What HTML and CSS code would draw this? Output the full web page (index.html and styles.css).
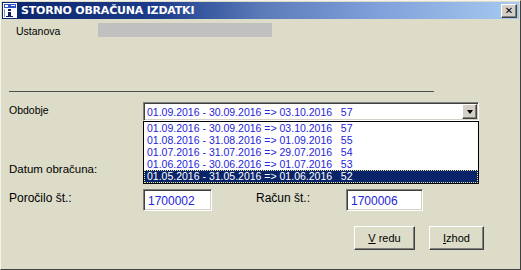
FILE: index.html
```html
<!DOCTYPE html>
<html lang="sl">
<head>
    <meta charset="UTF-8">
    <title>Storno obračuna izdatki</title>
    <link rel="stylesheet" href="styles.css">
</head>
<body>
    <div class="window">
        <div class="titlebar">
            <svg class="app-icon" width="14" height="15" viewBox="0 0 14 15">
                <rect x="0" y="0" width="14" height="15" fill="#ffffff"/>
                <rect x="1" y="1" width="12" height="4" fill="#3050c8"/>
                <rect x="2" y="2" width="3" height="2" fill="#ffffff"/>
                <rect x="8" y="2" width="4" height="1" fill="#ffffff"/>
                <rect x="5" y="6" width="3" height="2" fill="#102060"/>
                <rect x="5" y="9" width="3" height="5" fill="#102060"/>
                <rect x="3" y="13" width="7" height="1" fill="#102060"/>
                <rect x="1" y="6" width="1" height="8" fill="#8090c0"/>
            </svg>
            <span class="title">STORNO OBRAČUNA IZDATKI</span>
            <button class="close-btn">&#x2715;</button>
        </div>

        <div class="content">
            <div class="row row-ustanova">
                <span class="label small">Ustanova</span>
                <div class="grey-field"></div>
            </div>

            <div class="rule"></div>

            <div class="row row-obdobje">
                <span class="label small">Obdobje</span>
                <div class="combo">
                    <span class="combo-value">01.09.2016 - 30.09.2016 =&gt; 03.10.2016   57</span>
                    <span class="combo-btn"><span class="arrow"></span></span>
                    <ul class="combo-list">
                        <li>01.09.2016 - 30.09.2016 =&gt; 03.10.2016   57</li>
                        <li>01.08.2016 - 31.08.2016 =&gt; 01.09.2016   55</li>
                        <li>01.07.2016 - 31.07.2016 =&gt; 29.07.2016   54</li>
                        <li>01.06.2016 - 30.06.2016 =&gt; 01.07.2016   53</li>
                        <li class="selected">01.05.2016 - 31.05.2016 =&gt; 01.06.2016   52</li>
                    </ul>
                </div>
            </div>

            <div class="row row-datum">
                <span class="label">Datum obračuna:</span>
            </div>

            <div class="row row-stevilke">
                <span class="label">Poročilo št.:</span>
                <div class="input input-porocilo">1700002</div>
                <span class="label label-racun">Račun št.:</span>
                <div class="input input-racun">1700006</div>
            </div>

            <div class="row row-buttons">
                <button class="btn btn-ok"><u>V</u> redu</button>
                <button class="btn btn-exit"><u>I</u>zhod</button>
            </div>
        </div>
    </div>
</body>
</html>
```

FILE: styles.css
```css
body {
    margin: 0;
    font-family: "Liberation Sans", Arial, sans-serif;
    color: #000000;
    background: #dcdcc8;
}

.window {
    width: 521px;
    height: 270px;
    box-sizing: border-box;
    background: #dcdcc8;
    border: 1px solid;
    border-color: #f4f4ec #404040 #404040 #f4f4ec;
    padding: 1px;
    overflow: hidden;
}

.titlebar {
    height: 17px;
    display: flex;
    align-items: center;
    padding-left: 1px;
    background: linear-gradient(to right, #0a246a 0%, #1c3c8c 30%, #5a7ab8 50%, #7c9cd8 70%, #a6caf0 100%);
}

.app-icon {
    flex: none;
}

.title {
    margin-left: 4px;
    color: #ffffff;
    font-family: "DejaVu Sans", sans-serif;
    font-weight: bold;
    font-size: 11px;
    letter-spacing: -0.2px;
    flex: 1;
}

.close-btn {
    width: 16px;
    height: 14px;
    margin-right: 2px;
    padding: 0;
    background: #d4d0c8;
    border: 1px solid;
    border-color: #ffffff #404040 #404040 #ffffff;
    box-shadow: inset -1px -1px 0 #808080;
    font-size: 10px;
    font-weight: bold;
    line-height: 10px;
    color: #000000;
    font-family: "DejaVu Sans", sans-serif;
}

.content {
    display: flex;
    flex-direction: column;
}

.row {
    display: flex;
}

.label {
    font-size: 12px;
}

.label.small {
    font-size: 10.5px;
}

.row-ustanova {
    margin-top: 4px;
    height: 14px;
    align-items: center;
    padding-left: 14px;
}

.row-ustanova .label {
    width: 82px;
    padding-top: 2px;
}

.grey-field {
    width: 174px;
    height: 14px;
    background: #c0c0c0;
}

.rule {
    margin: 54px 0 0 7px;
    width: 425px;
    border-top: 1px solid #505050;
}

.row-obdobje {
    margin-top: 10px;
    padding-left: 7px;
}

.row-obdobje .label {
    width: 134px;
    padding-top: 2px;
}

.combo {
    position: relative;
    width: 336px;
    height: 19px;
    box-sizing: border-box;
    background: #ffffff;
    border: 1px solid;
    border-color: #808080 #ffffff #ffffff #808080;
    box-shadow: inset 1px 1px 0 #404040, inset -1px -1px 0 #d4d0c8;
    display: flex;
    align-items: center;
}

.combo-value {
    flex: 1;
    padding-left: 3px;
    font-size: 10.5px;
    color: #2424d8;
    white-space: pre;
}

.combo-btn {
    width: 15px;
    height: 15px;
    margin-right: 1px;
    box-sizing: border-box;
    background: #d4d0c8;
    border: 1px solid;
    border-color: #ffffff #404040 #404040 #ffffff;
    box-shadow: inset -1px -1px 0 #808080;
    display: flex;
    align-items: center;
    justify-content: center;
}

.arrow {
    width: 0;
    height: 0;
    border-left: 3px solid transparent;
    border-right: 3px solid transparent;
    border-top: 4px solid #000000;
}

/* popup list of the open combo */
.combo-list {
    position: absolute;
    top: 18px;
    left: -1px;
    width: 336px;
    box-sizing: border-box;
    margin: 0;
    padding: 0;
    list-style: none;
    background: #ffffff;
    border: 1px solid #000000;
}

.combo-list li {
    height: 12px;
    line-height: 12px;
    padding-left: 3px;
    font-size: 10.5px;
    color: #2424d8;
    white-space: pre;
}

.combo-list li.selected {
    height: 13px;
    line-height: 13px;
    background: #0a246a;
    color: #ffffff;
    outline: 1px dotted #e8e8a0;
    outline-offset: -1px;
}

.row-datum {
    margin-top: 42px;
    padding-left: 7px;
}

.row-datum .label {
    font-size: 11.5px;
}

.row-stevilke {
    margin-top: 14px;
    padding-left: 7px;
    align-items: flex-start;
}

.row-stevilke .label {
    width: 134px;
    padding-top: 2px;
}

.row-stevilke .label-racun {
    width: 90px;
    margin-left: 44px;
}

.input {
    height: 22px;
    box-sizing: border-box;
    background: #ffffff;
    border: 1px solid;
    border-color: #808080 #ffffff #ffffff #808080;
    box-shadow: inset 1px 1px 0 #404040, inset -1px -1px 0 #d4d0c8;
    padding: 4px 0 0 4px;
    font-size: 12px;
    color: #2424d8;
}

.input-porocilo {
    width: 69px;
}

.input-racun {
    width: 77px;
}

.row-buttons {
    margin-top: 15px;
    padding-left: 352px;
    gap: 14px;
}

.btn {
    height: 24px;
    padding: 0;
    background: #dcdcc8;
    border: 1px solid;
    border-color: #ffffff #404040 #404040 #ffffff;
    box-shadow: inset -1px -1px 0 #808080;
    font-family: "Liberation Sans", Arial, sans-serif;
    font-size: 11px;
    color: #000000;
}

.btn-ok {
    width: 61px;
}

.btn-exit {
    width: 55px;
}
```
